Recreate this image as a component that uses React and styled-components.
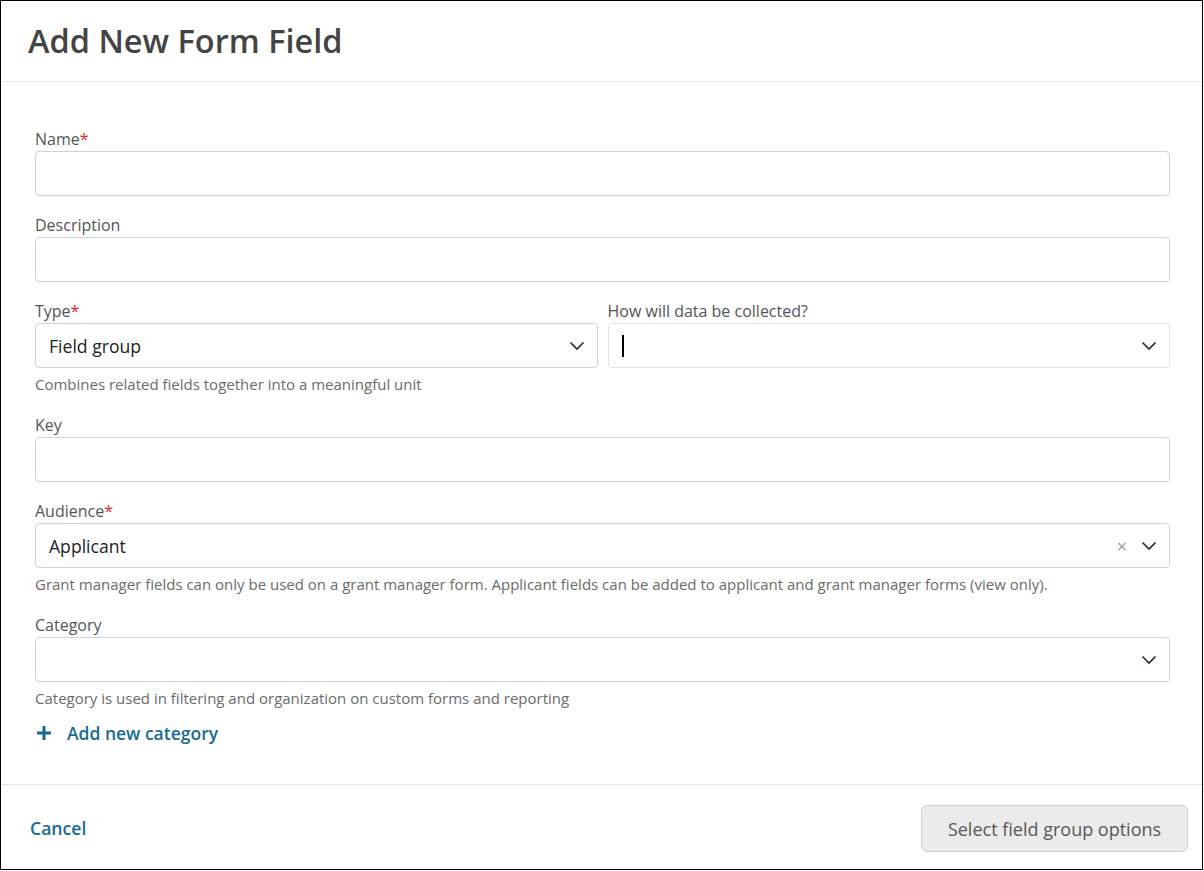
import React from 'react';
import styled, { createGlobalStyle } from 'styled-components';

const GlobalStyle = createGlobalStyle`
  html, body {
    margin: 0;
    padding: 0;
    background: #fff;
    font-family: 'Open Sans', 'Liberation Sans', sans-serif;
  }
  * { box-sizing: border-box; }
`;

const Frame = styled.div`
  width: 1203px;
  height: 870px;
  border: 1px solid #000;
  display: flex;
  flex-direction: column;
  background: #fff;
`;

const Header = styled.div`
  height: 81px;
  flex-shrink: 0;
  display: flex;
  align-items: center;
  padding: 0 27px 1px;
  border-bottom: 1px solid #e6e6e6;
`;

const Title = styled.h1`
  margin: 0;
  font-size: 32.5px;
  font-weight: 600;
  color: #444;
  line-height: 40px;
`;

const Body = styled.div`
  flex: 1;
  padding: 45px 32px 0 34px;
`;

const Field = styled.div`
  margin-bottom: ${p => (p.tight ? '0' : p.help ? '19px' : '17px')};
`;

const Label = styled.div`
  font-size: 16px;
  line-height: 24px;
  color: #555;
`;

const Star = styled.span`
  color: #e0272c;
`;

const Input = styled.div`
  height: 45px;
  border: 1px solid ${p => (p.faint ? '#e2e2e2' : '#d2d2d2')};
  border-radius: 4px;
  display: flex;
  align-items: center;
  padding: 0 12px 0 13px;
  font-size: 17.6px;
  color: #222;
`;

const Value = styled.span`
  flex: 1;
`;

const Caret = styled.span`
  display: block;
  width: 2px;
  height: 22px;
  background: #000;
`;

const Help = styled.div`
  margin-top: 6px;
  font-size: 15px;
  line-height: 20px;
  color: #6b6b6b;
`;

const Row = styled.div`
  display: grid;
  grid-template-columns: 1fr 1fr;
  gap: 10px;
`;

const Clear = styled.span`
  color: #999;
  font-size: 18px;
  line-height: 1;
  margin-right: 14px;
`;

const AddLink = styled.a`
  display: flex;
  align-items: center;
  gap: 16px;
  margin-top: 13px;
  font-size: 17.5px;
  line-height: 24px;
  font-weight: 600;
  color: #176a94;
  text-decoration: none;
  padding-left: 2px;
`;

const Footer = styled.div`
  height: 85px;
  flex-shrink: 0;
  border-top: 1px solid #e6e6e6;
  display: flex;
  justify-content: space-between;
  align-items: flex-start;
  padding: 20px 14px 0 29px;
`;

const Cancel = styled.a`
  font-size: 17.6px;
  font-weight: 600;
  color: #176a94;
  line-height: 46px;
  text-decoration: none;
`;

const Button = styled.button`
  height: 47px;
  width: 267px;
  border: 1px solid #cfcfcf;
  border-radius: 6px;
  background: #ebebeb;
  color: #585858;
  font-family: inherit;
  font-size: 18px;
  font-weight: 500;
`;

const Chevron = () => (
  <svg width="16" height="10" viewBox="0 0 16 10">
    <polyline points="1.5,1.5 8,8 14.5,1.5" fill="none" stroke="#1d2a3a" strokeWidth="1.6" />
  </svg>
);

const Plus = () => (
  <svg width="14" height="14" viewBox="0 0 14 14">
    <path d="M7 0v14M0 7h14" stroke="#176a94" strokeWidth="3" />
  </svg>
);

function TextField({ label, required }) {
  return (
    <Field>
      <Label>
        {label}
        {required && <Star>*</Star>}
      </Label>
      <Input />
    </Field>
  );
}

export default function App() {
  return (
    <>
      <GlobalStyle />
      <Frame>
        <Header>
          <Title>Add New Form Field</Title>
        </Header>
        <Body>
          <TextField label="Name" required />
          <TextField label="Description" />
          <Field help>
            <Row>
              <div>
                <Label>
                  Type<Star>*</Star>
                </Label>
                <Input>
                  <Value>Field group</Value>
                  <Chevron />
                </Input>
              </div>
              <div>
                <Label>How will data be collected?</Label>
                <Input faint>
                  <Value>
                    <Caret />
                  </Value>
                  <Chevron />
                </Input>
              </div>
            </Row>
            <Help>Combines related fields together into a meaningful unit</Help>
          </Field>
          <TextField label="Key" />
          <Field help>
            <Label>
              Audience<Star>*</Star>
            </Label>
            <Input>
              <Value>Applicant</Value>
              <Clear>×</Clear>
              <Chevron />
            </Input>
            <Help>
              Grant manager fields can only be used on a grant manager form. Applicant fields can be added to applicant and grant manager forms (view only).
            </Help>
          </Field>
          <Field tight>
            <Label>Category</Label>
            <Input>
              <Value />
              <Chevron />
            </Input>
            <Help>Category is used in filtering and organization on custom forms and reporting</Help>
          </Field>
          <AddLink href="#">
            <Plus />
            Add new category
          </AddLink>
        </Body>
        <Footer>
          <Cancel href="#">Cancel</Cancel>
          <Button>Select field group options</Button>
        </Footer>
      </Frame>
    </>
  );
}
